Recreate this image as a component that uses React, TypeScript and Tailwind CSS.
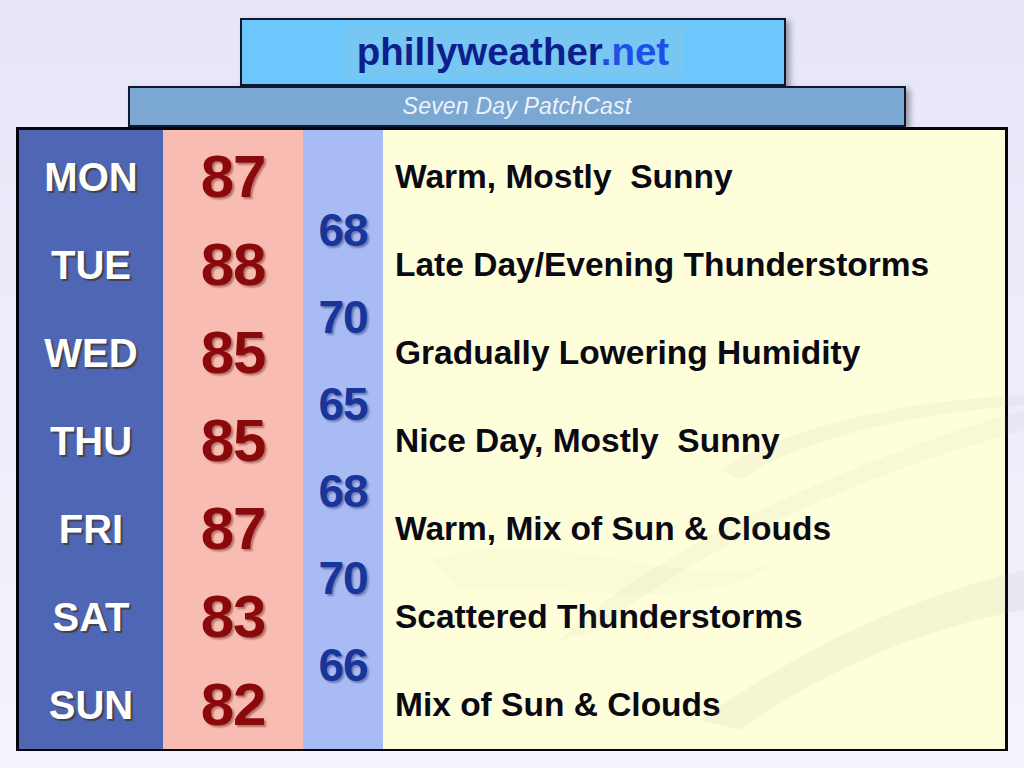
const days = [
  { day: 'MON', high: 87, text: 'Warm, Mostly  Sunny' },
  { day: 'TUE', high: 88, text: 'Late Day/Evening Thunderstorms' },
  { day: 'WED', high: 85, text: 'Gradually Lowering Humidity' },
  { day: 'THU', high: 85, text: 'Nice Day, Mostly  Sunny' },
  { day: 'FRI', high: 87, text: 'Warm, Mix of Sun & Clouds' },
  { day: 'SAT', high: 83, text: 'Scattered Thunderstorms' },
  { day: 'SUN', high: 82, text: 'Mix of Sun & Clouds' },
];

const lows = [68, 70, 65, 68, 70, 66];

const Swooshes = () => (
  // faint background swirls, drawn over the panel like the slide template
  <svg className="pointer-events-none absolute inset-0" width="1024" height="768" viewBox="0 0 1024 768">
    <path d="M560 640 C 640 560, 820 470, 1024 410 L 1024 430 C 840 480, 680 560, 600 630 Z" fill="#8a8a70" opacity="0.05" />
    <path d="M430 560 C 560 520, 700 600, 780 560 C 700 620, 560 580, 460 590 Z" fill="#8a8a70" opacity="0.035" />
    <path d="M700 720 C 800 650, 900 600, 1024 570 L 1024 610 C 910 630, 810 680, 740 730 Z" fill="#7d7d7d" opacity="0.08" />
    <path d="M720 470 C 780 430, 900 400, 1024 395 L 1024 405 C 900 415, 800 440, 740 480 Z" fill="#7d7d7d" opacity="0.05" />
  </svg>
);

export default function App() {
  return (
    <div className="relative h-[768px] w-[1024px] overflow-hidden bg-gradient-to-b from-[#e6e6f8] to-[#f4f4fc] pt-[18px] font-['Liberation_Sans',Arial,sans-serif]">
      <div className="relative ml-[240px] flex h-[68px] w-[546px] items-center justify-center border-2 border-[#101830] bg-[#6cc8fc] shadow-[4px_3px_6px_rgba(0,0,0,0.35)]">
        <div className="flex h-[52px] w-[340px] items-center justify-center bg-[#78c6f2]">
          <span className="text-[38.5px] font-bold leading-none text-[#0d1f8c]">
            phillyweather<span className="text-[#1e50e6]">.net</span>
          </span>
        </div>
      </div>
      <div className="relative ml-[128px] flex h-[41px] w-[778px] items-center justify-center border-2 border-[#101830] bg-[#7ba7d3] shadow-[4px_3px_6px_rgba(0,0,0,0.35)]">
        <span className="text-[23px] italic leading-none tracking-[0.2px] text-[#eef2fa]">Seven Day PatchCast</span>
      </div>
      <div className="relative ml-[16px] grid h-[624px] w-[992px] grid-cols-[144px_140px_80px_1fr] border-[3px] border-[#05050f]">
        <div className="flex flex-col bg-[#4f66b4] pt-[3px]">
          {days.map((d) => (
            <div key={d.day} className="flex h-[88px] items-center justify-center text-[40px] font-bold text-white [text-shadow:2px_2px_1px_rgba(60,40,10,0.6)]">
              {d.day}
            </div>
          ))}
        </div>
        <div className="flex flex-col bg-[#f8bcb2] pt-[3px]">
          {days.map((d) => (
            <div key={d.day} className="flex h-[88px] items-center justify-center text-[60px] font-bold tracking-[-1px] text-[#8a0a0c] [text-shadow:2px_2px_2px_rgba(80,0,0,0.4)]">
              {d.high}
            </div>
          ))}
        </div>
        <div className="flex flex-col bg-[#a9bbf5] pt-[57px]">
          {lows.map((l, i) => (
            <div key={i} className="flex h-[87px] items-center justify-center text-[46px] font-bold tracking-[-1px] text-[#17359a] [text-shadow:2px_2px_2px_rgba(0,0,60,0.35)]">
              {l}
            </div>
          ))}
        </div>
        <div className="flex flex-col bg-[#fffedb] pl-[12px] pt-[3px]">
          {days.map((d) => (
            <div key={d.day} className="flex h-[88px] items-center whitespace-pre text-[33.5px] font-bold text-[#0a0a14]">
              {d.text}
            </div>
          ))}
        </div>
      </div>
      <Swooshes />
    </div>
  );
}
